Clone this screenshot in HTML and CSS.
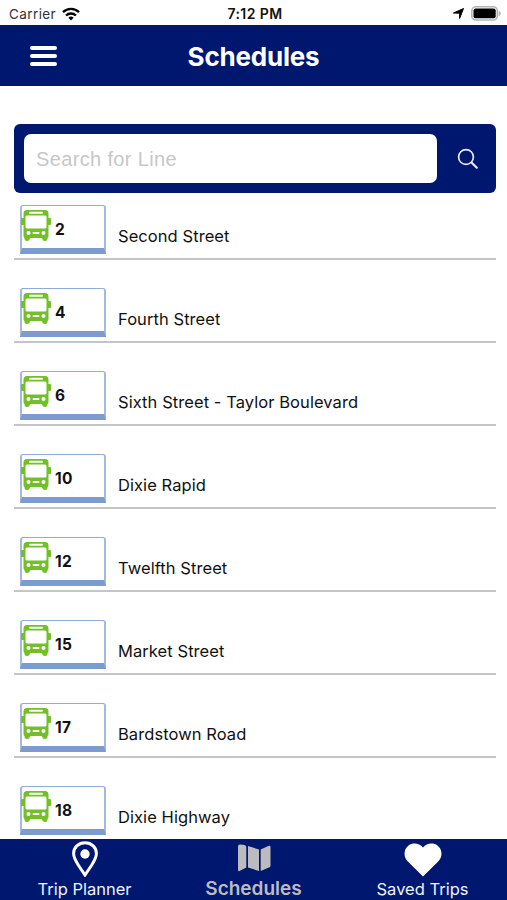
FILE: index.html
```
<!DOCTYPE html>
<html lang="en">
<head>
    <meta charset="UTF-8">
    <meta name="viewport" content="width=device-width, initial-scale=1.0">
    <title>Schedules</title>
    <link rel="stylesheet" href="styles.css">
</head>
<body>
    <svg class="hidden">
        <symbol id="bus" viewBox="0 0 30 32">
            <path fill-rule="evenodd" d="M6 0h18Q27.500 0 27.500 3.500V8H29q1 0 1 1v5q0 1-1 1h-1.500v11q0 1.500-1 2v1q0 2-2.500 2t-3-2.500L20.500 28h-11L9 28.500Q8.500 31 6 31t-2.500-2v-1q-1-.5-1-2V15H1q-1 0-1-1V9q0-1 1-1h1.500V3.500Q2.500 0 6 0zM9 1.800q-1 0-1 1t1 1h12q1 0 1-1t-1-1zM6 5.500Q4.500 5.500 4.500 7v10q0 1.500 1.500 1.500h18q1.500 0 1.500-1.500V7q0-1.500-1.500-1.500zM7.500 21a2 2 0 1 0 0 4 2 2 0 0 0 0-4zM22.500 21a2 2 0 1 0 0 4 2 2 0 0 0 0-4zM12.500 22q-1 0-1 1t1 1h5q1 0 1-1t-1-1z"/>
        </symbol>
    </svg>

    <div class="app">
        <!-- Status bar -->
        <div class="status">
            <div class="status-left">
                <span class="carrier">Carrier</span>
                <svg class="wifi" width="18" height="14" viewBox="0 0 18 14" fill="none" stroke="#000" stroke-width="2.300">
                    <path d="M1 5.200a11.500 11.500 0 0 1 16 0M4 8.500a7.300 7.300 0 0 1 10 0"/>
                    <path d="M9 13.500l-2.600-2.700a3.800 3.800 0 0 1 5.200 0z" fill="#000" stroke="none"/>
                </svg>
            </div>
            <span class="time">7:12 PM</span>
            <div class="status-right">
                <svg width="11" height="11" viewBox="0 0 11 11"><path d="M10.500.5L6.600 10.500V5.200L.5 5z" stroke="#000" stroke-linejoin="round"/></svg>
                <svg width="30" height="15" viewBox="0 0 30 15">
                    <rect x=".8" y=".8" width="25.500" height="13.200" rx="4" fill="#fff" stroke="#b4b4b4" stroke-width="1.600"/>
                    <rect x="2.500" y="2.500" width="22.200" height="9.800" rx="2"/>
                    <path d="M27.600 4.800q2.200.8 2.200 2.700t-2.200 2.700z" fill="#b4b4b4"/>
                </svg>
            </div>
        </div>

        <header class="header">
            <button class="menu" aria-label="Menu"><i></i><i></i><i></i></button>
            <h1>Schedules</h1>
        </header>

        <main class="content">
            <form class="search">
                <input type="text" placeholder="Search for Line">
                <button type="button" aria-label="Search">
                    <svg width="22" height="22" viewBox="0 0 22 22" fill="none" stroke="#e6ebff" stroke-linecap="round">
                        <circle cx="9" cy="9" r="7.400" stroke-width="1.700"/>
                        <path d="M14.500 14.500l5.300 5.200" stroke-width="2.200"/>
                    </svg>
                </button>
            </form>

            <ul class="lines">
                <li><div class="badge"><svg><use href="#bus"/></svg><b>2</b></div><span>Second Street</span></li>
                <li><div class="badge"><svg><use href="#bus"/></svg><b>4</b></div><span>Fourth Street</span></li>
                <li><div class="badge"><svg><use href="#bus"/></svg><b>6</b></div><span>Sixth Street - Taylor Boulevard</span></li>
                <li><div class="badge"><svg><use href="#bus"/></svg><b>10</b></div><span>Dixie Rapid</span></li>
                <li><div class="badge"><svg><use href="#bus"/></svg><b>12</b></div><span>Twelfth Street</span></li>
                <li><div class="badge"><svg><use href="#bus"/></svg><b>15</b></div><span>Market Street</span></li>
                <li><div class="badge"><svg><use href="#bus"/></svg><b>17</b></div><span>Bardstown Road</span></li>
                <li><div class="badge"><svg><use href="#bus"/></svg><b>18</b></div><span>Dixie Highway</span></li>
            </ul>
        </main>

        <!-- Bottom tabs -->
        <nav class="tabs">
            <a class="tab">
                <svg width="28" height="38" viewBox="0 0 28 38">
                    <path d="M14 3.800C7.500 3.800 2.600 8.400 2.600 14.500c0 3.800 2 7.300 4.800 11.800L14 36l6.600-9.700c2.800-4.500 4.800-8 4.800-11.800 0-6.100-4.900-10.700-11.400-10.700z" fill="none" stroke="#fff" stroke-width="3"/>
                    <circle cx="14" cy="15" r="4.700" fill="#fff"/>
                </svg>
                <span>Trip Planner</span>
            </a>
            <a class="tab active">
                <svg width="34" height="38" viewBox="0 0 34 38" fill="#bcbcc0">
                    <path d="M1 7.500Q1 5.500 3 5.600q6 0 6.300 2.400v20.500L2.500 32Q1 32.500 1 31zM11 7l11 3.500V32l-11-3.500zM23.700 10.500l8.100-3.700q1.700-.6 1.700 1v19q0 1-1 1.500L23.700 32z"/>
                </svg>
                <span>Schedules</span>
            </a>
            <a class="tab">
                <svg width="38" height="38" viewBox="0 0 38 38" fill="#fff">
                    <path d="M19 37.500L3.600 22.300C-1 17.500-.2 10 4.500 6.500 9 3.200 15.500 4.200 19 8.500c3.500-4.300 10-5.300 14.500-2C38.200 10 39 17.500 34.400 22.300z"/>
                </svg>
                <span>Saved Trips</span>
            </a>
        </nav>
    </div>
</body>
</html>
```
FILE: styles.css
```
* { margin: 0; padding: 0; box-sizing: border-box; }
body { background: #fff; color: #111; font-family: Inter, "Liberation Sans", sans-serif; }
button { background: none; border: none; }
svg { display: block; flex-shrink: 0; }
.hidden { display: none; }

.app { height: 100vh; display: flex; flex-direction: column; overflow: hidden; }

.status { height: 25px; flex-shrink: 0; display: grid; grid-template-columns: 1fr auto 1fr; align-items: center; padding: 2px 6px 0 9px; font-size: 13.5px; }
.status-left { display: flex; align-items: center; gap: 6px; }
.carrier { color: #333; letter-spacing: 0.4px; }
.time { font-weight: 600; font-size: 14px; letter-spacing: 0.4px; }
.status-right { display: flex; align-items: center; justify-content: flex-end; gap: 7px; }

.header { height: 61px; flex-shrink: 0; background: #00176f; display: grid; grid-template-columns: 1fr auto 1fr; align-items: center; padding: 0 30px; }
.header h1 { color: #fff; font-size: 26px; font-weight: 700; letter-spacing: -0.2px; padding-top: 1px; }
.menu { width: 27px; display: flex; flex-direction: column; gap: 4px; }
.menu i { height: 4px; background: #fff; border-radius: 2px; }

.content { flex: 1; min-height: 0; overflow: hidden; padding: 38px 11px 0 14px; }
.search { height: 69px; background: #00176f; border-radius: 6px; display: flex; align-items: center; padding-left: 10px; }
.search input { width: 413px; height: 49px; border: none; border-radius: 7px; padding: 2px 12px 0; font-family: "Liberation Sans", sans-serif; font-size: 20px; letter-spacing: 0.35px; outline: none; }
.search input::placeholder { color: #c7c7c9; }
.search button { flex: 1; display: flex; justify-content: center; padding-left: 2px; }

.lines { list-style: none; }
.lines li { height: 67px; border-bottom: 2px solid #c5c5c5; display: flex; padding: 12px 0 0 6px; }
.lines li + li { margin-top: 16px; }
.lines span { font-size: 16.5px; line-height: 20px; letter-spacing: 0.07px; margin: 21px 0 0 12px; }
.badge { width: 86px; height: 49px; border: 1px solid #91abd9; border-width: 1px 2px 6px; border-color: #91abd9 #a3b9e0 #7c9bcf #a3b9e0; border-radius: 3px 3px 0 0; display: flex; align-items: flex-start; }
.badge svg { width: 30px; height: 32px; margin: 4px 0 0 -1px; fill: #72bf28; }
.badge b { font-size: 15.5px; line-height: 20px; font-weight: 700; letter-spacing: 0.3px; margin: 14px 0 0 4px; }

.tabs { height: 61px; flex-shrink: 0; background: #00176f; display: grid; grid-template-columns: repeat(3, 1fr); }
.tab { display: flex; flex-direction: column; align-items: center; color: #f0f2ff; font-size: 16.5px; line-height: 20px; white-space: nowrap; }
.tab span { margin-top: 2px; }
.tab.active { color: #bcbcc0; font-size: 19px; font-weight: 600; }
```
